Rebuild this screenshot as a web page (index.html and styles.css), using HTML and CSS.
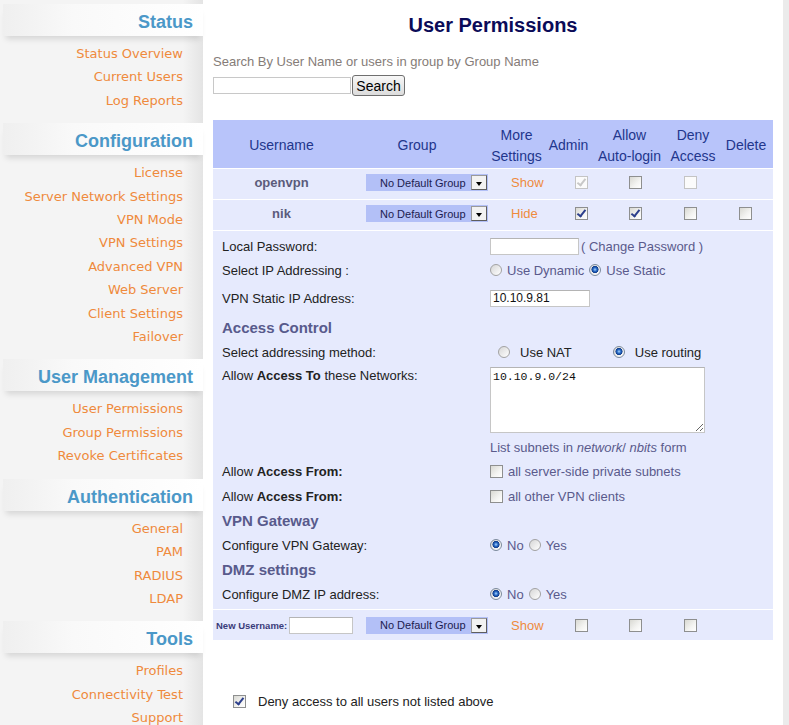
FILE: index.html
```html
<!DOCTYPE html>
<html lang="en">
<head>
<meta charset="utf-8">
<title>User Permissions</title>
<link rel="stylesheet" href="styles.css">
</head>
<body>
<div class="page">
  <nav class="sidebar">
    <section class="nav-group">
      <h2 class="nav-title">Status</h2>
      <ul class="nav-list">
        <li><a href="#">Status Overview</a></li>
        <li><a href="#">Current Users</a></li>
        <li><a href="#">Log Reports</a></li>
      </ul>
    </section>
    <section class="nav-group">
      <h2 class="nav-title">Configuration</h2>
      <ul class="nav-list">
        <li><a href="#">License</a></li>
        <li><a href="#">Server Network Settings</a></li>
        <li><a href="#">VPN Mode</a></li>
        <li><a href="#">VPN Settings</a></li>
        <li><a href="#">Advanced VPN</a></li>
        <li><a href="#">Web Server</a></li>
        <li><a href="#">Client Settings</a></li>
        <li><a href="#">Failover</a></li>
      </ul>
    </section>
    <section class="nav-group">
      <h2 class="nav-title">User Management</h2>
      <ul class="nav-list">
        <li><a href="#">User Permissions</a></li>
        <li><a href="#">Group Permissions</a></li>
        <li><a href="#">Revoke Certificates</a></li>
      </ul>
    </section>
    <section class="nav-group">
      <h2 class="nav-title">Authentication</h2>
      <ul class="nav-list">
        <li><a href="#">General</a></li>
        <li><a href="#">PAM</a></li>
        <li><a href="#">RADIUS</a></li>
        <li><a href="#">LDAP</a></li>
      </ul>
    </section>
    <section class="nav-group">
      <h2 class="nav-title">Tools</h2>
      <ul class="nav-list">
        <li><a href="#">Profiles</a></li>
        <li><a href="#">Connectivity Test</a></li>
        <li><a href="#">Support</a></li>
      </ul>
    </section>
  </nav>

  <main class="content">
    <h1 class="page-title">User Permissions</h1>
    <div class="search">
      <div class="search-label">Search By User Name or users in group by Group Name</div>
      <div class="search-row">
        <input class="search-input" type="text">
        <button class="search-btn" type="button">Search</button>
      </div>
    </div>

    <div class="perm-table">
      <div class="row head">
        <div class="hc">Username</div>
        <div class="hc hc-group">Group</div>
        <div class="hc">More<br>Settings</div>
        <div class="hc">Admin</div>
        <div class="hc">Allow<br>Auto-login</div>
        <div class="hc">Deny<br>Access</div>
        <div class="hc">Delete</div>
      </div>

      <div class="row data">
        <div class="c c-user">openvpn</div>
        <div class="c c-group"><div class="select"><span class="select-text">No Default Group</span><span class="select-arrow"></span></div></div>
        <div class="c c-more"><a href="#" class="toggle">Show</a></div>
        <div class="c c-admin"><span class="cb on disabled"></span></div>
        <div class="c c-auto"><span class="cb"></span></div>
        <div class="c c-deny"><span class="cb disabled"></span></div>
        <div class="c c-del"></div>
      </div>

      <div class="row data">
        <div class="c c-user">nik</div>
        <div class="c c-group"><div class="select"><span class="select-text">No Default Group</span><span class="select-arrow"></span></div></div>
        <div class="c c-more"><a href="#" class="toggle">Hide</a></div>
        <div class="c c-admin"><span class="cb on"></span></div>
        <div class="c c-auto"><span class="cb on"></span></div>
        <div class="c c-deny"><span class="cb"></span></div>
        <div class="c c-del"><span class="cb"></span></div>
      </div>

      <div class="details">
        <div class="field">
          <div class="field-label">Local Password:</div>
          <div class="field-value"><input class="txt pw" type="password"><span class="muted gap2">( Change Password )</span></div>
        </div>
        <div class="field">
          <div class="field-label">Select IP Addressing :</div>
          <div class="field-value opts muted">
            <span class="opt"><span class="rd"></span>Use Dynamic</span>
            <span class="opt"><span class="rd on"></span>Use Static</span>
          </div>
        </div>
        <div class="field mt4">
          <div class="field-label">VPN Static IP Address:</div>
          <div class="field-value"><input class="txt ip" type="text" value="10.10.9.81"></div>
        </div>
        <h3 class="section-title mt6">Access Control</h3>
        <div class="field">
          <div class="field-label">Select addressing method:</div>
          <div class="field-value method">
            <span class="opt wide"><span class="rd"></span>Use NAT</span>
            <span class="opt wide second"><span class="rd on"></span>Use routing</span>
          </div>
        </div>
        <div class="field tall mt2">
          <div class="field-label top">Allow <b>Access To</b> these Networks:</div>
          <div class="field-value top"><textarea class="nets">10.10.9.0/24</textarea></div>
        </div>
        <div class="field hint-row mt2">
          <div></div>
          <div class="field-value muted"><span>List subnets in <i>network</i>/ <i>nbits</i> form</span></div>
        </div>
        <div class="field mt1">
          <div class="field-label">Allow <b>Access From:</b></div>
          <div class="field-value muted"><span class="opt"><span class="cb"></span>all server-side private subnets</span></div>
        </div>
        <div class="field mt1">
          <div class="field-label">Allow <b>Access From:</b></div>
          <div class="field-value muted"><span class="opt"><span class="cb"></span>all other VPN clients</span></div>
        </div>
        <h3 class="section-title mt1">VPN Gateway</h3>
        <div class="field">
          <div class="field-label">Configure VPN Gateway:</div>
          <div class="field-value opts muted">
            <span class="opt"><span class="rd on"></span>No</span>
            <span class="opt"><span class="rd"></span>Yes</span>
          </div>
        </div>
        <h3 class="section-title mt1">DMZ settings</h3>
        <div class="field">
          <div class="field-label">Configure DMZ IP address:</div>
          <div class="field-value opts muted">
            <span class="opt"><span class="rd on"></span>No</span>
            <span class="opt"><span class="rd"></span>Yes</span>
          </div>
        </div>
      </div>

      <div class="row data new-row">
        <div class="c c-new"><span class="new-label">New Username:</span><input class="txt new-input" type="text"></div>
        <div class="c c-group"><div class="select"><span class="select-text">No Default Group</span><span class="select-arrow"></span></div></div>
        <div class="c c-more"><a href="#" class="toggle">Show</a></div>
        <div class="c c-admin"><span class="cb"></span></div>
        <div class="c c-auto"><span class="cb"></span></div>
        <div class="c c-deny"><span class="cb"></span></div>
        <div class="c c-del"></div>
      </div>
    </div>

    <div class="deny-all">
      <span class="cb on"></span>
      <span>Deny access to all users not listed above</span>
    </div>
  </main>
  <div class="edge"></div>
</div>
</body>
</html>
```

FILE: styles.css
```css
* { box-sizing: border-box; }
html, body { margin: 0; padding: 0; }
body {
  font-family: "Liberation Sans", Arial, sans-serif;
  font-size: 13px;
  color: #222;
  background: #fff;
}

.page {
  display: grid;
  grid-template-columns: 203px 580px 6px;
  min-height: 725px;
}

/* ---------- sidebar ---------- */
.sidebar {
  background: linear-gradient(to right, #f4f4f4 0, #f4f4f4 90%, #e4e4e4 100%);
  padding-top: 4px;
}
.nav-group + .nav-group { margin-top: 11px; }
.nav-title {
  margin: 0 0 0 3px;
  height: 32px;
  padding-right: 10px;
  text-align: right;
  font: bold 18px/36px "Liberation Sans", Arial, sans-serif;
  color: #4b98c8;
  background: linear-gradient(to right, #efefef 0, #f9f9f9 35%, #ffffff 100%);
  box-shadow: 0 6px 6px -3px rgba(0, 0, 0, 0.13);
}
.nav-list {
  list-style: none;
  margin: 0;
  padding: 6px 20px 0 0;
  text-align: right;
  font: 13px/23.4px "DejaVu Sans", Verdana, sans-serif;
}
.nav-list a { color: #ef8a3c; text-decoration: none; }

/* ---------- main ---------- */
.content { padding: 13px 10px 0; }
.page-title {
  margin: 0;
  text-align: center;
  font: bold 20px/24px "Liberation Sans", Arial, sans-serif;
  color: #0b0b58;
}
.search-label {
  margin-top: 17px;
  line-height: 16px;
  color: #857c78;
}
.search-row {
  margin-top: 5px;
  display: flex;
  align-items: center;
  height: 21px;
}
.search-input {
  width: 138px;
  height: 17px;
  border: 1px solid #c8c8c8;
  background: #fff;
  padding: 0 2px;
  margin: 0;
}
.search-btn {
  width: 53px;
  height: 21px;
  margin: 0 0 0 1px;
  padding: 0;
  font: 14px "Liberation Sans", Arial, sans-serif;
  color: #000;
  border: 1px solid #6f6f6f;
  border-radius: 3px;
  background: linear-gradient(#f7f7f7, #dcdcdc);
}

/* ---------- permissions table ---------- */
.perm-table {
  margin-top: 24px;
  display: flex;
  flex-direction: column;
  gap: 1px;
  background: #fff;
}
.row {
  display: grid;
  grid-template-columns: 137px 138px 57px 47px 75px 52px 54px;
  align-items: center;
  background: #e6eafd;
  height: 30px;
}
.row.data { padding-bottom: 3px; }
.row.data.new-row { padding-bottom: 0; }
.row.head {
  height: 48px;
  padding-top: 3px;
  background: #b8c4fa;
  color: #22368c;
  font-size: 14px;
  line-height: 21px;
}
.hc { text-align: center; }
.hc-group { padding-right: 4px; }

.c { display: flex; align-items: center; height: 100%; }
.c-user {
  justify-content: center;
  font-weight: bold;
  color: #5b5b7b;
}
.c-group { padding-left: 16px; }
.c-more { padding-left: 23px; }
.c-admin { padding-left: 30px; }
.c-auto { padding-left: 37px; }
.c-deny { padding-left: 17px; }
.c-del { padding-left: 20px; }

.toggle { color: #ef8a3c; text-decoration: none; font-size: 13px; }

.select {
  display: flex;
  align-items: center;
  width: 122px;
  height: 17px;
  padding-left: 14px;
  background: #b3c0f7;
  color: #1c1c50;
  font-size: 11px;
}
.select-text { flex: 1; white-space: nowrap; }
.select-arrow {
  width: 16px;
  height: 15px;
  margin-right: 1px;
  border: 1px solid #5e5e5e;
  border-top-color: #9a9a9a;
  border-left-color: #9a9a9a;
  background: #f2f2f2;
  display: flex;
  align-items: flex-end;
  justify-content: center;
  padding-bottom: 3px;
}
.select-arrow::before {
  content: "";
  border-left: 3.5px solid transparent;
  border-right: 3.5px solid transparent;
  border-top: 4px solid #000;
}

/* checkbox & radio */
.cb {
  position: relative;
  display: inline-block;
  flex: none;
  width: 13px;
  height: 13px;
  border: 1px solid #8e8f8f;
  background: linear-gradient(135deg, #d9d9d3 0, #f4f4f2 60%, #ffffff 100%);
}
.cb.on::after {
  content: "";
  position: absolute;
  left: 3px;
  top: 0px;
  width: 3px;
  height: 7px;
  border: solid #2c3f8c;
  border-width: 0 2px 2px 0;
  transform: rotate(38deg);
}
.cb.disabled {
  border-color: #c4c4c4;
  background: #fbfbfb;
}
.cb.disabled.on::after { border-color: #c8c8c8; }

.rd {
  display: inline-block;
  flex: none;
  width: 12px;
  height: 12px;
  border-radius: 50%;
  border: 1px solid #a2a2a2;
  background: linear-gradient(135deg, #d6d6d6, #ffffff);
}
.rd.on {
  border-color: #7c8a9c;
  background:
    radial-gradient(circle at 50% 45%, #a9d6ff 0, #2b6cc6 1.8px, #0e3b8a 3.3px, rgba(255,255,255,0) 3.8px),
    linear-gradient(135deg, #d6d6d6, #ffffff);
}

/* ---------- details ---------- */
.details {
  background: #e6eafd;
  padding: 3px 0 3px;
}
.field {
  display: grid;
  grid-template-columns: 277px 1fr;
  align-items: center;
  height: 24px;
}
.field-label { padding-left: 9px; white-space: nowrap; }
.field-value { display: flex; align-items: center; white-space: nowrap; }
.field.tall { height: 68px; align-items: start; }
.field-label.top { line-height: 20px; }
.field-value.top { padding-top: 1px; }
.field.hint-row { height: 22px; }

.mt1 { margin-top: 1px; }
.mt2 { margin-top: 2px; }
.mt4 { margin-top: 4px; }
.mt6 { margin-top: 6px; }

.section-title {
  margin-bottom: 0;
  height: 24px;
  padding-left: 9px;
  font: bold 15px/24px "Liberation Sans", Arial, sans-serif;
  color: #585a8c;
}
.section-title.mt1 { margin-top: 1px; }
.section-title.mt6 { margin-top: 6px; }

.muted { color: #5a5a8c; }
.gap2 { margin-left: 2px; }

.txt {
  height: 17px;
  margin: 0;
  padding: 0 3px;
  border: 1px solid #c6c6c6;
  border-top-color: #b4b4b4;
  background: #fff;
  font: 12px "Liberation Sans", Arial, sans-serif;
  color: #111;
}
.txt.pw { width: 89px; }
.txt.ip { width: 100px; padding-left: 2px; }

.opts { gap: 5px; }
.opt { display: inline-flex; align-items: center; gap: 5px; }
.method { padding-left: 8px; }
.opt.wide { gap: 10px; }
.opt.second { margin-left: 41px; }

.nets {
  width: 215px;
  height: 66px;
  margin: 0;
  padding: 2px 2px;
  border: 1px solid #c6c6c6;
  border-top-color: #b4b4b4;
  background: #fff;
  font: 11.5px/14px "Liberation Mono", "Courier New", monospace;
  color: #111;
  resize: both;
}

/* new user row */
.c-new { padding-left: 3px; gap: 2px; }
.new-label {
  font: bold 9.5px "Liberation Sans", Arial, sans-serif;
  color: #3a3c7a;
  white-space: nowrap;
}
.txt.new-input { width: 64px; flex: none; }

/* ---------- deny all ---------- */
.deny-all {
  margin-top: 49px;
  height: 24px;
  display: flex;
  align-items: center;
  gap: 12px;
  padding-left: 20px;
  color: #222;
}

.edge { background: #ebebeb; }
```
